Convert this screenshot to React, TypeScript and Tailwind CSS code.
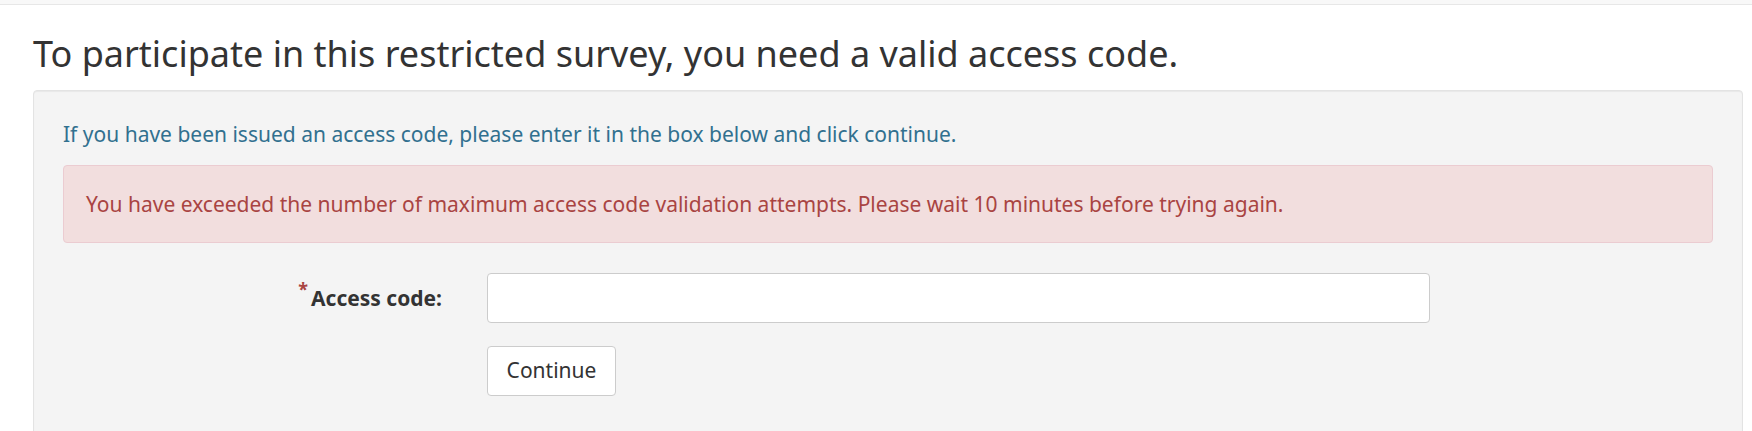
import React from "react";

export default function App() {
  return (
    <div className="min-h-[431px] bg-white font-['Noto_Sans',sans-serif] text-[#333]">
      <div className="h-[5px] bg-[#f8f8f8] border-b border-[#e7e7e7]" />
      <div className="pl-[33px] pr-[9px]">
        <h1 className="mt-[29px] mb-[16px] text-[36px] leading-[40px] font-normal text-[#333]">
          To participate in this restricted survey, you need a valid access code.
        </h1>
        <div className="rounded-[4px] border border-[#e3e3e3] bg-[#f4f4f4] shadow-[inset_0_1px_1px_rgba(0,0,0,0.05)] px-[29px] pt-[28px] pb-[40px]">
          <p className="text-[21px] leading-[30px] text-[#31708f]">
            If you have been issued an access code, please enter it in the box below and click continue.
          </p>
          <div className="mt-[16px] rounded-[4px] border border-[#ebccd1] bg-[#f2dede] px-[22px] py-[23px] text-[21px] leading-[30px] text-[#a94442]">
            You have exceeded the number of maximum access code validation attempts. Please wait 10 minutes before trying again.
          </div>
          <div className="mt-[30px] flex items-center">
            <div className="w-[379px] flex justify-end">
              <label className="text-[21px] font-bold leading-[30px] text-[#333]">
                <span className="relative -top-[10px] mr-[3px] text-[18px] text-[#a94442]">*</span>
                Access code:
              </label>
            </div>
            <input
              type="text"
              className="ml-[45px] h-[50px] w-[943px] rounded-[4px] border border-[#ccc] bg-white px-3 text-[21px] outline-none"
            />
          </div>
          <div className="mt-[23px] pl-[424px]">
            <button className="h-[50px] w-[129px] rounded-[4px] border border-[#ccc] bg-white text-[21px] text-[#333]">
              Continue
            </button>
          </div>
        </div>
      </div>
    </div>
  );
}
